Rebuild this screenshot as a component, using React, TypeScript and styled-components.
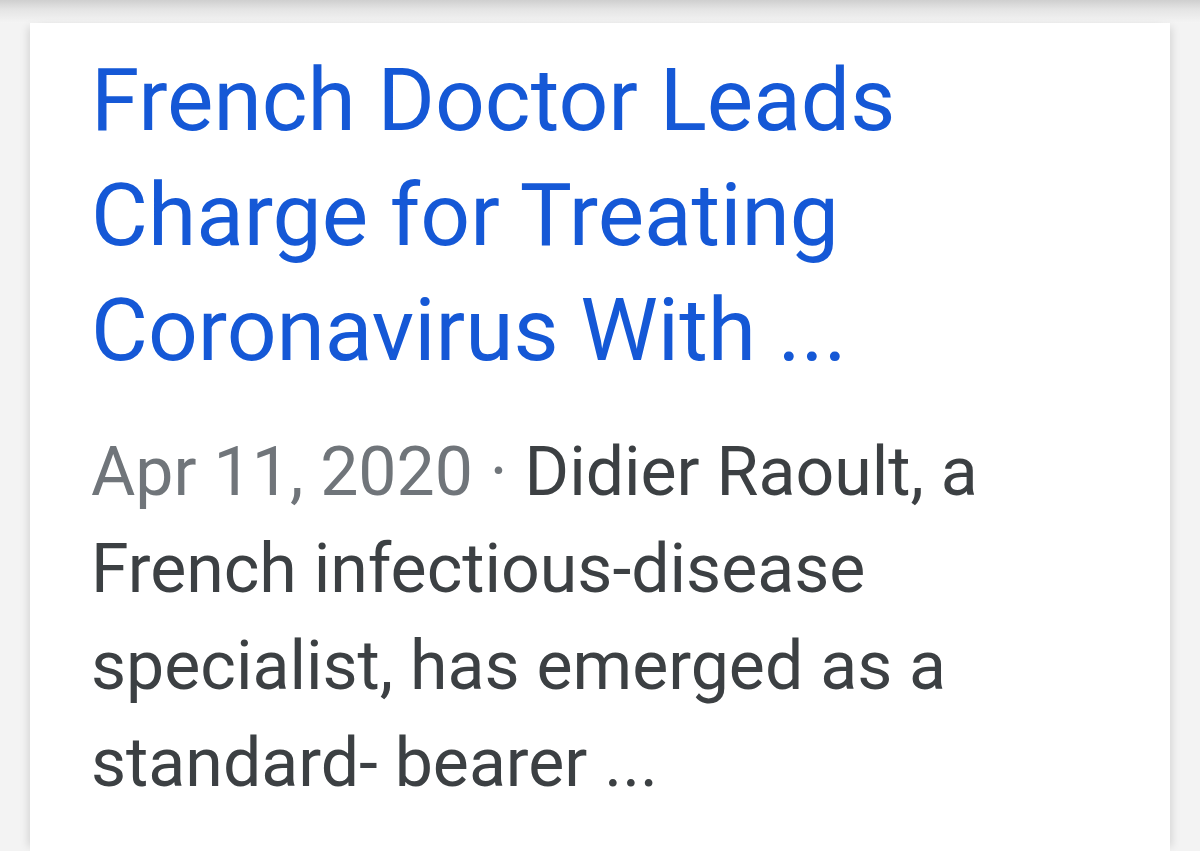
import React from "react";
import styled, { createGlobalStyle } from "styled-components";

const Global = createGlobalStyle`
  html, body { margin: 0; padding: 0; background: #f3f3f3; }
  body { font-family: Roboto, "Noto Sans", Arial, sans-serif; }
`;

const Page = styled.div`
  width: 1200px;
  height: 851px;
  overflow: hidden;
  background: #f3f3f3;
  display: flex;
  flex-direction: column;
`;

const TopShade = styled.div`
  height: 23px;
  flex: none;
  background: linear-gradient(to bottom, #cfcfcf 0%, #e4e4e4 40%, #f4f4f4 100%);
`;

const Card = styled.div`
  margin: 0 30px;
  flex: 1;
  background: #ffffff;
  box-shadow: -6px 0 8px -4px rgba(0, 0, 0, 0.12), 6px 0 8px -4px rgba(0, 0, 0, 0.12);
  padding: 20px 61px 0 61px;
`;

const Title = styled.a`
  display: block;
  color: #1558d6;
  font-size: 87.5px;
  line-height: 115px;
  font-weight: 400;
  text-decoration: none;
  max-width: 880px;
`;

const Snippet = styled.div`
  margin-top: 36px;
  color: #3c4043;
  font-size: 68px;
  line-height: 97px;
  max-width: 980px;
`;

const DateText = styled.span`
  color: #70757a;
`;

export default function App() {
  return (
    <Page>
      <Global />
      <TopShade />
      <Card>
        <Title href="#">
          French Doctor Leads
          <br />
          Charge for Treating
          <br />
          Coronavirus With ...
        </Title>
        <Snippet>
          <DateText>Apr 11, 2020 · </DateText>Didier Raoult, a
          <br />
          French infectious-disease
          <br />
          specialist, has emerged as a
          <br />
          standard- bearer ...
        </Snippet>
      </Card>
    </Page>
  );
}
